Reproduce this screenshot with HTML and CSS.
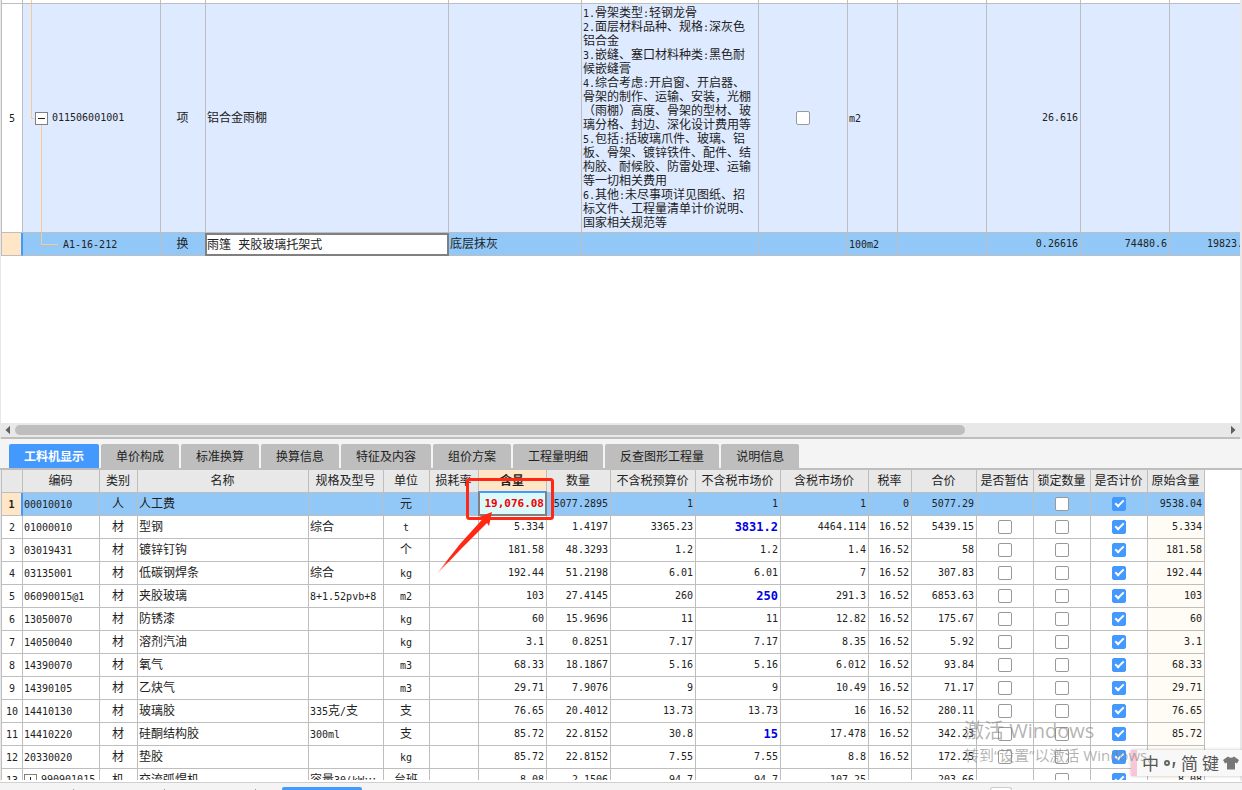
FILE: index.html
```html
<!DOCTYPE html>
<html lang="zh-CN">
<head>
<meta charset="utf-8">
<title>工料机显示</title>
<link rel="stylesheet" href="styles.css">
</head>
<body>
<main class="app">
  <section class="pane pane-top">
    <table class="grid grid-items">
      <colgroup>
        <col style="width:21px"><col style="width:138px"><col style="width:45px"><col style="width:243px"><col style="width:133px"><col style="width:177px"><col style="width:89px"><col style="width:50px"><col style="width:89px"><col style="width:94px"><col style="width:89px"><col style="width:76px">
      </colgroup>
      <tbody>
        <tr class="sliver"><td></td><td class="trunk"></td><td></td><td></td><td></td><td></td><td></td><td></td><td></td><td></td><td></td><td></td></tr>
        <tr class="item">
          <th class="rowno" scope="row">5</th>
          <td class="code parent"><button class="expander" type="button" aria-label="折叠"></button><span class="n">011506001001</span></td>
          <td class="mid">项</td>
          <td>铝合金雨棚</td>
          <td></td>
          <td class="desc"><span class="n">1.</span>骨架类型<span class="n">:</span>轻钢龙骨<br><span class="n">2.</span>面层材料品种、规格<span class="n">:</span>深灰色<br>铝合金<br><span class="n">3.</span>嵌缝、塞口材料种类<span class="n">:</span>黑色耐<br>候嵌缝膏<br><span class="n">4.</span>综合考虑<span class="n">:</span>开启窗、开启器、<br>骨架的制作、运输、安装，光棚<br>（雨棚）高度、骨架的型材、玻<br>璃分格、封边、深化设计费用等<br><span class="n">5.</span>包括<span class="n">:</span>括玻璃爪件、玻璃、铝<br>板、骨架、镀锌铁件、配件、结<br>构胶、耐候胶、防雷处理、运输<br>等一切相关费用<br><span class="n">6.</span>其他<span class="n">:</span>未尽事项详见图纸、招<br>标文件、工程量清单计价说明、<br>国家相关规范等</td>
          <td class="mid"><input type="checkbox" aria-label="主要清单"></td>
          <td><span class="n">m2</span></td>
          <td></td>
          <td class="num">26.616</td>
          <td></td>
          <td></td>
        </tr>
        <tr class="quota">
          <th class="rowno current" scope="row"></th>
          <td class="code child"><span class="n">A1-16-212</span></td>
          <td class="mid">换</td>
          <td class="editing"><input class="name-edit" type="text" aria-label="名称" value="雨篷 夹胶玻璃托架式"></td>
          <td>底层抹灰</td>
          <td></td>
          <td></td>
          <td><span class="n">100m2</span></td>
          <td></td>
          <td class="num">0.26616</td>
          <td class="num">74480.6</td>
          <td class="num">19823.</td>
        </tr>
      </tbody>
    </table>
    <div class="scrollbar">
      <button class="arrow left" type="button" aria-label="向左滚动"></button>
      <div class="track"><div class="thumb"></div></div>
      <button class="arrow right" type="button" aria-label="向右滚动"></button>
    </div>
  </section>

  <section class="pane-bottom">
    <nav class="tabs">
      <button class="tab active" type="button">工料机显示</button>
      <button class="tab" type="button">单价构成</button>
      <button class="tab" type="button">标准换算</button>
      <button class="tab" type="button">换算信息</button>
      <button class="tab" type="button">特征及内容</button>
      <button class="tab" type="button">组价方案</button>
      <button class="tab" type="button">工程量明细</button>
      <button class="tab" type="button">反查图形工程量</button>
      <button class="tab" type="button">说明信息</button>
    </nav>
    <div class="pane resources">
      <table class="grid grid-res">
        <colgroup>
          <col style="width:21px"><col style="width:77px"><col style="width:38px"><col style="width:171px"><col style="width:75px"><col style="width:46px"><col style="width:49px"><col style="width:68px"><col style="width:64px"><col style="width:85px"><col style="width:85px"><col style="width:88px"><col style="width:43px"><col style="width:65px"><col style="width:57px"><col style="width:57px"><col style="width:57px"><col style="width:57px">
        </colgroup>
        <thead>
          <tr><th></th><th>编码</th><th>类别</th><th>名称</th><th>规格及型号</th><th>单位</th><th>损耗率</th><th class="current">含量</th><th>数量</th><th>不含税预算价</th><th>不含税市场价</th><th>含税市场价</th><th>税率</th><th>合价</th><th>是否暂估</th><th>锁定数量</th><th>是否计价</th><th>原始含量</th></tr>
        </thead>
        <tbody id="resources"></tbody>
      </table>
      <svg class="callout" width="120" height="104" viewBox="0 0 120 104" aria-hidden="true">
        <defs>
          <linearGradient id="tail" x1="0" y1="1" x2="1" y2="0">
            <stop offset="0" stop-color="#ff2814" stop-opacity="0.1"/>
            <stop offset="0.2" stop-color="#ff2814"/>
          </linearGradient>
        </defs>
        <rect x="32.500" y="8.500" width="85" height="39" rx="2" fill="none" stroke="#ff2814" stroke-width="3"/>
        <path d="M2.500 101.500L25 73L48 47.500L44 46L57 41L54 55L52 52L27 77L3 102Z" fill="url(#tail)"/>
      </svg>
    </div>
    <footer class="statusbar"><i class="tick"></i><i class="tick"></i><i class="tick"></i><span class="active-mark"></span><span class="box-mark"></span></footer>
  </section>

  <div class="ime">
    <span>中</span>
    <svg width="14" height="14" viewBox="0 0 14 14" aria-hidden="true"><circle cx="4" cy="7" r="2" fill="none" stroke="#666" stroke-width="2"/><path d="M10 6h2.500l-1.500 6h-1.500z" fill="#666"/></svg>
    <span>简</span><span>键</span>
    <svg width="16" height="14" viewBox="0 0 16 14" aria-hidden="true"><path d="M5 0.500Q8 3 11 0.500L16 4L14 7.500L12 6.500V13.500H4V6.500L2 7.500L0 4Z" fill="#777"/></svg>
  </div>
  <div class="watermark"><p class="big">激活 Windows</p><p class="small">转到“设置”以激活 Windows。</p></div>
</main>
<script src="grid.js"></script>
</body>
</html>
```
FILE: styles.css
```css
* { box-sizing: border-box; }

body {
  margin: 0;
  background: #fff;
  color: #222;
  font: 12px/14px "Noto Sans CJK SC", sans-serif;
}

button {
  margin: 0;
  padding: 0;
  border: 0;
  font: inherit;
  color: inherit;
}

.app {
  position: relative;
  display: flex;
  flex-direction: column;
  height: 100vh;
  overflow: hidden;
}

.pane {
  border: solid #e8e8e8;
  border-width: 0 2px 0 1px;
  overflow: hidden;
}

.pane-top {
  flex: 1;
  display: flex;
  flex-direction: column;
  align-items: flex-start;
  min-height: 0;
}

.n, .num, .rowno { font-family: "DejaVu Sans Mono", monospace; font-size: 10px; }
.n { line-height: 1px; }

/* Grids */
.grid {
  table-layout: fixed;
  width: 1px;
  border-collapse: separate;
  border-spacing: 0;
  border-left: 1px solid #bebebe;
}

.grid td, .grid th {
  height: 23px;
  padding: 0 2px 2px 1px;
  border: solid #bebebe;
  border-width: 0 1px 1px 0;
  white-space: nowrap;
  overflow: hidden;
  text-align: left;
  font-weight: 400;
  vertical-align: middle;
}

.grid .num { padding-bottom: 0; text-align: right; }
.grid .mid { padding: 0 1px 2px 0; text-align: center; }
.grid .rowno { padding: 2px 0 0; text-align: center; }
.grid .current { background: #ffe6c6; font-weight: 700; }
.grid .price-set {
  font-size: 12px;
  font-weight: 700;
  color: #0000e6;
}

.grid .sliver td { height: 4px; padding: 0; }
.item td { background: #deeaff; }
.quota td, .selected td { background: #92c8f8; }
.quota .rowno, .selected .rowno { border-right: 2px solid #4499ff; }
.grid .desc { padding: 1px 0 3px 1px; }

/* Tree column */
.trunk { background: linear-gradient(#fcca8e, #fcca8e) 8px 0 / 1px 100% no-repeat; }
.grid .parent {
  padding-left: 12px;
  background:
    linear-gradient(#fcca8e, #fcca8e) 8px 0 / 1px 50% no-repeat,
    linear-gradient(#fcca8e, #fcca8e) 8px 50% / 5px 1px no-repeat,
    linear-gradient(#fcca8e, #fcca8e) 18px 100% / 1px 50% no-repeat,
    #deeaff;
}
.grid .child {
  padding-left: 40px;
  background:
    linear-gradient(#fcca8e, #fcca8e) 18px 0 / 1px 50% no-repeat,
    linear-gradient(#fcca8e, #fcca8e) 18px 50% / 17px 1px no-repeat,
    #92c8f8;
}
.expander {
  width: 13px;
  height: 13px;
  margin-right: 4px;
  border: 1px solid #808080;
  vertical-align: middle;
  background: linear-gradient(#222, #222) center / 7px 1px no-repeat, #fff;
}
.expander.closed {
  background:
    linear-gradient(#222, #222) center / 7px 1px no-repeat,
    linear-gradient(#222, #222) center / 1px 7px no-repeat,
    #fff;
}

/* Editors */
.grid .editing { padding: 0; overflow: visible; }
.name-edit {
  display: block;
  width: calc(100% + 2px);
  height: 23px;
  margin: 0 -1px -1px;
  padding: 0 0 3px;
  border: 2px solid #808080;
  background: #fff;
  color: inherit;
  font: 12px/14px "DejaVu Sans Mono", "Noto Sans CJK SC", monospace;
}
.amount-edit {
  display: block;
  width: calc(100% + 2px);
  height: 25px;
  margin: -2px -1px -1px;
  padding: 0 1px 1px;
  border: 2px solid #808080;
  border-top-color: #4499ff;
  background: #dcfafa;
  color: #f00000;
  font: bold 11px/14px "DejaVu Sans Mono", monospace;
  text-align: right;
}

input[type="checkbox"] {
  appearance: none;
  display: block;
  width: 14px;
  height: 14px;
  margin: 2px auto 0;
  border: 1px solid #999;
  border-radius: 2px;
  background: #fff;
}
input[type="checkbox"]:checked {
  border-color: #4499ff;
  background: #4499ff;
}
input[type="checkbox"]:checked::after {
  content: "";
  box-sizing: border-box;
  display: block;
  width: 5px;
  height: 9px;
  margin: 0 0 0 4px;
  border: solid #fff;
  border-width: 0 2px 2px 0;
  transform: rotate(45deg);
}

/* Horizontal scrollbar */
.scrollbar {
  display: flex;
  align-items: center;
  align-self: stretch;
  height: 16px;
  margin-top: auto;
  border-bottom: 2px solid #bebebe;
  background: #e8e8e8;
}
.track { flex: 1; padding: 0 12px 0 4px; }
.thumb { width: 79%; height: 10px; border-radius: 5px; background: #bebebe; }
.arrow { width: 10px; height: 14px; background: #606060; }
.arrow.left { clip-path: polygon(90% 20%, 90% 80%, 45% 50%); }
.arrow.right { clip-path: polygon(10% 20%, 10% 80%, 55% 50%); }

/* Lower pane */
.pane-bottom {
  display: flex;
  flex-direction: column;
  height: 351px;
}
.tabs {
  display: flex;
  gap: 2px;
  padding: 5px 9px 0;
  border-bottom: 2px solid #bebebe;
  background: #f4f4f4;
}
.tab {
  height: 24px;
  padding: 0 15px;
  border-radius: 2px 2px 0 0;
  background: #bebebe;
}
.tab.active { background: #4499ff; color: #fff; font-weight: 700; }

.resources { position: relative; flex: 1; min-height: 0; border-bottom: 2px solid #fff; }
.grid thead th { padding: 0 1px 2px 0; background: #e8e8e8; text-align: center; }
.grid-res td:last-child { background: #fffbf5; }
.grid-res .selected td:last-child { background: #92c8f8; }
.grid thead .current { background: #ffe6c6; }

.callout { position: absolute; left: 434px; top: 1px; }

.statusbar {
  display: flex;
  align-items: flex-end;
  height: 8px;
  border-top: 1px solid #d0d0d0;
  background: #f4f4f4;
}
.tick { width: 1px; height: 1px; margin-left: 73px; background: #999; }
.tick + .tick { margin-left: 90px; }
.active-mark {
  width: 80px;
  height: 3px;
  margin-left: 26px;
  border-radius: 2px 2px 0 0;
  background: #4499ff;
}
.box-mark {
  width: 22px;
  height: 3px;
  margin-left: 628px;
  border: solid #ccc;
  border-width: 1px 1px 0;
  border-radius: 3px 3px 0 0;
  background: #fff;
}

/* Desktop overlays */
.watermark {
  position: absolute;
  right: 84px;
  bottom: 23px;
  width: 194px;
  color: rgba(130, 130, 130, 0.6);
  font-family: "Open Sans", "Noto Sans CJK SC", sans-serif;
  white-space: nowrap;
  pointer-events: none;
}
.watermark p { margin: 0; }
.watermark .big { font-size: 20px; line-height: 24px; }
.watermark .small { font-size: 15px; line-height: 24px; }

.ime {
  position: absolute;
  right: 0;
  bottom: 14px;
  display: flex;
  align-items: center;
  gap: 4px;
  width: 111px;
  height: 26px;
  padding-left: 5px;
  border-left: 6px solid #f9c6d9;
  background: #f8f8f8;
  box-shadow: 0 0 3px rgba(0, 0, 0, 0.25);
  color: #555;
  font-size: 17px;
  line-height: 24px;
}
```
FILE: grid.js
```js
// code, kind, name, spec, unit, amount, quantity, budget price, market price, taxed price, tax, total, original amount
const rows = [
  ["00010010", "人", "人工费", "", "元", "19,076.08", "5077.2895", "1", "1", "1", "0", "5077.29", "9538.04"],
  ["01000010", "材", "型钢", "综合", "t", "5.334", "1.4197", "3365.23", "3831.2", "4464.114", "16.52", "5439.15", "5.334"],
  ["03019431", "材", "镀锌钉钩", "", "个", "181.58", "48.3293", "1.2", "1.2", "1.4", "16.52", "58", "181.58"],
  ["03135001", "材", "低碳钢焊条", "综合", "kg", "192.44", "51.2198", "6.01", "6.01", "7", "16.52", "307.83", "192.44"],
  ["06090015@1", "材", "夹胶玻璃", "8+1.52pvb+8", "m2", "103", "27.4145", "260", "250", "291.3", "16.52", "6853.63", "103"],
  ["13050070", "材", "防锈漆", "", "kg", "60", "15.9696", "11", "11", "12.82", "16.52", "175.67", "60"],
  ["14050040", "材", "溶剂汽油", "", "kg", "3.1", "0.8251", "7.17", "7.17", "8.35", "16.52", "5.92", "3.1"],
  ["14390070", "材", "氧气", "", "m3", "68.33", "18.1867", "5.16", "5.16", "6.012", "16.52", "93.84", "68.33"],
  ["14390105", "材", "乙炔气", "", "m3", "29.71", "7.9076", "9", "9", "10.49", "16.52", "71.17", "29.71"],
  ["14410130", "材", "玻璃胶", "335克/支", "支", "76.65", "20.4012", "13.73", "13.73", "16", "16.52", "280.11", "76.65"],
  ["14410220", "材", "硅酮结构胶", "300ml", "支", "85.72", "22.8152", "30.8", "15", "17.478", "16.52", "342.23", "85.72"],
  ["20330020", "材", "垫胶", "", "kg", "85.72", "22.8152", "7.55", "7.55", "8.8", "16.52", "172.25", "85.72"],
  ["990901015", "机", "交流弧焊机", "容量30(kW…", "台班", "8.08", "2.1506", "94.7", "94.7", "107.25", "", "203.66", "8.08"]
];

// Latin runs use the narrow monospaced face beside the Chinese text.
const mixed = (text) => text.replace(/[\x21-\x7e]+/g, (run) => `<span class="n">${run}</span>`);
const num = (text) => `<td class="num">${text}</td>`;
const box = (label, checked) => `<td class="mid"><input type="checkbox" aria-label="${label}"${checked ? " checked" : ""}></td>`;

document.getElementById("resources").innerHTML = rows.map((r, i) => {
  const first = i === 0;
  const machine = r[1] === "机";
  const market = r[7] === r[8] ? num(r[8]) : `<td class="num price-set">${r[8]}</td>`;
  const amount = first
    ? `<td class="editing"><input class="amount-edit" type="text" aria-label="含量" value="${r[5]}"></td>`
    : num(r[5]);
  const expander = machine ? '<button class="expander closed" type="button" aria-label="展开"></button>' : "";
  return `<tr${first ? ' class="selected"' : ""}>
    <th class="rowno${first ? " current" : ""}" scope="row">${i + 1}</th>
    <td class="code">${expander}${mixed(r[0])}</td>
    <td class="mid">${r[1]}</td><td>${mixed(r[2])}</td><td>${mixed(r[3])}</td>
    <td class="mid">${mixed(r[4])}</td><td></td>
    ${amount}${num(r[6])}${num(r[7])}${market}${num(r[9])}${num(r[10])}${num(r[11])}
    ${first || machine ? "<td></td>" : box("是否暂估", false)}
    ${box("锁定数量", false)}${box("是否计价", true)}${num(r[12])}
  </tr>`;
}).join("");
```
